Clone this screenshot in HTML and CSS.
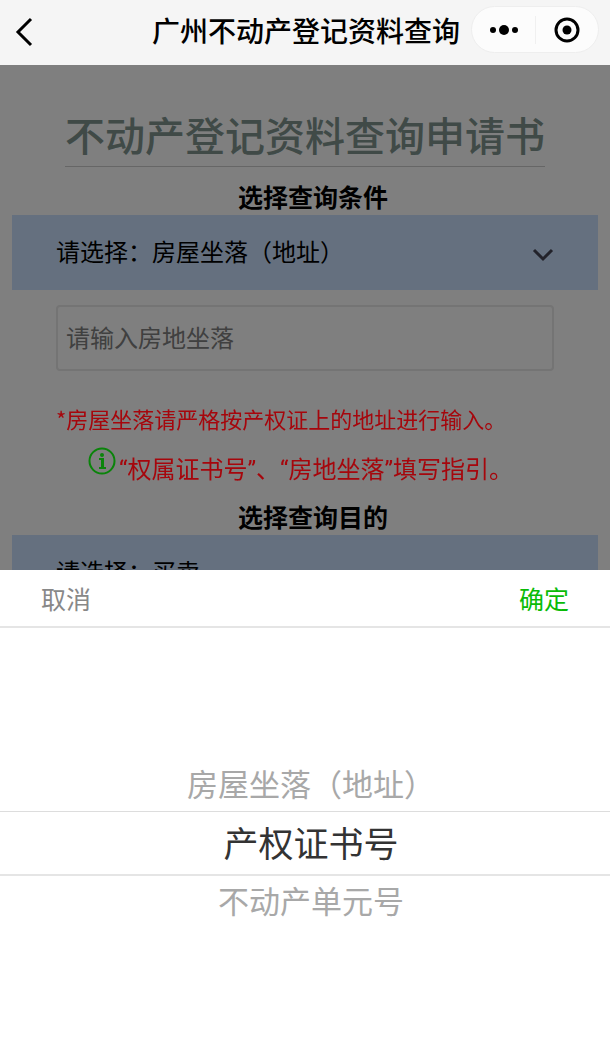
FILE: index.html
```html
<!DOCTYPE html>
<html lang="zh-CN">
<head>
    <meta charset="UTF-8">
    <meta name="viewport" content="width=device-width, initial-scale=1.0">
    <title>广州不动产登记资料查询</title>
    <link rel="stylesheet" href="styles.css">
</head>
<body>
    <header class="navbar">
        <button class="nav-back" type="button" aria-label="返回">
            <svg width="20" height="30" viewBox="0 0 20 30" fill="none" stroke="#000" stroke-width="3">
                <path d="M17 2 L4 15 L17 28"/>
            </svg>
        </button>
        <span class="nav-title">广州不动产登记资料查询</span>
        <div class="capsule">
            <button type="button" aria-label="更多">
                <svg width="30" height="12" viewBox="0 0 30 12">
                    <circle cx="4" cy="6" r="3"/>
                    <circle cx="15" cy="6" r="5"/>
                    <circle cx="26" cy="6" r="3"/>
                </svg>
            </button>
            <button type="button" aria-label="关闭">
                <svg width="28" height="28" viewBox="0 0 28 28">
                    <circle cx="14" cy="14" r="11" fill="none" stroke="#000" stroke-width="3"/>
                    <circle cx="14" cy="14" r="4.5"/>
                </svg>
            </button>
        </div>
    </header>

    <main class="page">
        <h1 class="page-title">不动产登记资料查询申请书</h1>

        <h2 class="section-title">选择查询条件</h2>
        <div class="select-row">
            <label for="queryType">请选择：</label>
            <select id="queryType">
                <option>房屋坐落（地址）</option>
                <option>产权证书号</option>
                <option>不动产单元号</option>
            </select>
            <svg class="arrow" width="22" height="14" viewBox="0 0 22 14" fill="none" stroke="#445" stroke-width="3">
                <path d="M2 2 L11 11 L20 2"/>
            </svg>
        </div>

        <div class="field">
            <input type="text" id="address" aria-label="房地坐落" placeholder="请输入房地坐落">
            <p class="note">*房屋坐落请严格按产权证上的地址进行输入。</p>
            <a class="guide" href="#">
                <svg class="info" width="28" height="28" viewBox="0 0 28 28" fill="none" stroke="#0a840a" stroke-width="2">
                    <circle cx="14" cy="14" r="12.5"/>
                    <circle cx="14" cy="8" r="2" fill="#0a840a" stroke="none"/>
                    <path d="M11 12 H15 M11 21 H18"/>
                    <path d="M14.5 11 V21" stroke-width="3"/>
                </svg>
                <span>“权属证书号”、“房地坐落”填写指引。</span>
            </a>
        </div>

        <h2 class="section-title">选择查询目的</h2>
        <div class="select-row">
            <label for="purpose">请选择：</label>
            <select id="purpose">
                <option>买卖</option>
            </select>
        </div>
    </main>

    <div class="mask"></div>

    <section class="picker">
        <div class="picker-bar">
            <button class="cancel" type="button">取消</button>
            <button class="confirm" type="button">确定</button>
        </div>
        <div class="picker-list" role="radiogroup" aria-label="选择查询条件">
            <label class="picker-item"><input type="radio" name="type">房屋坐落（地址）</label>
            <label class="picker-item active"><input type="radio" name="type" checked>产权证书号</label>
            <label class="picker-item"><input type="radio" name="type">不动产单元号</label>
        </div>
    </section>
</body>
</html>
```

FILE: styles.css
```css
* {
    box-sizing: border-box;
}
body {
    margin: 0;
    height: 100vh;
    overflow: hidden;
    font-family: "Noto Sans CJK SC", sans-serif;
    font-size: 24px;
    color: #000;
    background-color: #fff;
}
button, input, select {
    font: inherit;
    color: inherit;
    background: none;
    border: none;
    padding: 0;
    margin: 0;
}
button {
    cursor: pointer;
}
svg {
    display: block;
}

/* 顶部导航 */
.navbar {
    position: relative;
    z-index: 3;
    display: flex;
    align-items: center;
    justify-content: space-between;
    height: 65px;
    padding: 0 11px 6px 14px;
    background-color: #f5f5f5;
}
.nav-back {
    padding-top: 4px;
}
.nav-title {
    flex: 1;
    padding-right: 11px;
    text-align: right;
    font-size: 28px;
    font-weight: 500;
    white-space: nowrap;
}
.capsule {
    display: flex;
    width: 128px;
    height: 47px;
    border: 1px solid #eee;
    border-radius: 24px;
    background-color: #fcfcfc;
}
.capsule button {
    flex: 1;
    display: flex;
    align-items: center;
    justify-content: center;
}
.capsule button + button::before {
    content: "";
    width: 1px;
    height: 28px;
    margin-right: 17px;
    background-color: #f0f0f0;
}
.capsule button + button {
    justify-content: flex-start;
}

/* 表单 */
.page {
    padding: 41px 12px 0;
}
.page-title {
    width: fit-content;
    margin: 0 auto;
    padding-bottom: 4px;
    border-bottom: 1px solid #ccc;
    font-size: 40px;
    font-weight: 500;
    line-height: 56px;
    color: #80948f;
}
.section-title {
    margin: 12px 0 0;
    padding: 0 0 2px 16px;
    text-align: center;
    font-size: 25px;
    font-weight: 700;
    line-height: 34px;
}
.select-row {
    display: flex;
    align-items: center;
    height: 75px;
    padding: 0 44px 4px;
    background-color: #cae1ff;
}
.select-row select {
    flex: 1;
    appearance: none;
}
.arrow {
    margin-top: 8px;
}
.field {
    padding: 15px 44px 0;
}
.field input {
    display: block;
    width: 100%;
    height: 66px;
    padding: 0 8px 4px;
    border: 2px solid #e8e8e8;
    border-radius: 4px;
}
.field input::placeholder {
    color: #808080;
    opacity: 1;
}
/* 提示文字显示在遮罩之上 */
.note,
.guide {
    position: relative;
    z-index: 2;
    line-height: 34px;
    color: #a6060c;
}
.note {
    margin: 30px 0 0;
    font-size: 22px;
}
.guide {
    display: flex;
    align-items: flex-start;
    gap: 3px;
    margin: 12px 0 0 32px;
    font-family: Roboto, "Noto Sans CJK SC", sans-serif;
    text-decoration: none;
    white-space: nowrap;
}
.guide span {
    padding-top: 6px;
}

/* 底部选择器 */
.mask {
    position: fixed;
    inset: 0;
    z-index: 1;
    background-color: rgba(0, 0, 0, 0.5);
}
.picker {
    position: fixed;
    left: 0;
    right: 0;
    bottom: 0;
    z-index: 3;
    background-color: #fff;
}
.picker-bar {
    display: flex;
    justify-content: space-between;
    height: 58px;
    padding: 0 41px;
    border-bottom: 2px solid #e5e5e5;
    font-size: 25px;
}
.cancel {
    color: #888;
}
.confirm {
    color: #09bb07;
}
.picker-list {
    display: flex;
    flex-direction: column;
    justify-content: center;
    height: 431px;
    text-align: center;
}
.picker-item {
    padding: 0 0 4px 12px;
    font-size: 31px;
    line-height: 48px;
    color: #a8a8a8;
}
.picker-item input {
    position: absolute;
    opacity: 0;
}
.picker-item.active {
    padding-bottom: 2px;
    border-top: 1px solid #ddd;
    border-bottom: 2px solid #e5e5e5;
    font-size: 35px;
    line-height: 60px;
    color: #333;
}
```
